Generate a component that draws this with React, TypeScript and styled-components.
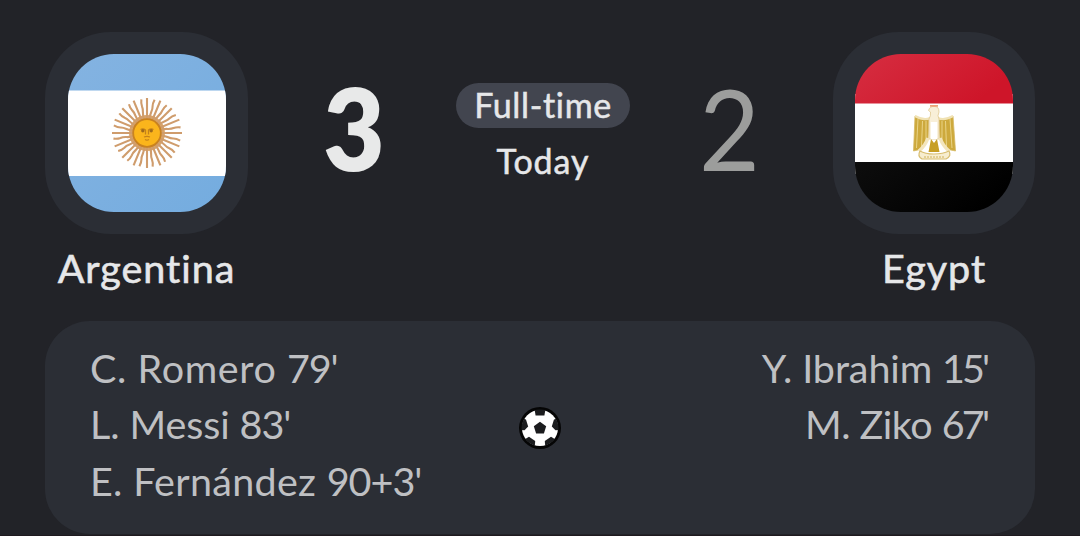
import React from 'react';
import styled, { createGlobalStyle } from 'styled-components';

const GlobalStyle = createGlobalStyle`
  body {
    margin: 0;
    background: #222328;
    overflow: hidden;
  }
`;

const Card = styled.main`
  box-sizing: border-box;
  width: 1080px;
  height: 536px;
  padding: 32px 45px 0;
  background: #222328;
  border-bottom: 1px solid #1f1a1f;
  font-family: Lato, 'Liberation Sans', sans-serif;
  color: #e6e7e9;
`;

const Header = styled.header`
  display: grid;
  grid-template-columns: 203px 212px 166px 207px 202px;
  height: 289px;
`;

const Team = styled.section`
  display: flex;
  flex-direction: column;
  align-items: center;
`;

const Badge = styled.div`
  display: flex;
  align-items: center;
  justify-content: center;
  width: 100%;
  height: 202px;
  border-radius: 66px;
  background: #2b2e35;
`;

const Flag = styled.svg`
  width: 158px;
  height: 158px;
  border-radius: 46px;
`;

const TeamName = styled.div<{ $spacing: number }>`
  margin-top: 10px;
  font-size: 39.5px;
  line-height: 48px;
  letter-spacing: ${(p) => p.$spacing}px;
  -webkit-text-stroke: 0.6px currentColor;
  white-space: nowrap;
`;

const Score = styled.div<{ $winner?: boolean }>`
  margin-top: 27px;
  text-align: center;
  font-size: ${(p) => (p.$winner ? 114 : 113)}px;
  line-height: 136px;
  font-weight: ${(p) => (p.$winner ? 800 : 400)};
  color: ${(p) => (p.$winner ? '#e8e9e9' : '#9c9d9c')};
  transform: scaleX(0.93);
`;

const Status = styled.section`
  display: flex;
  flex-direction: column;
  align-items: center;
  padding-top: 51px;
  font-size: 34px;
  -webkit-text-stroke: 0.5px currentColor;
`;

const Pill = styled.div`
  width: 174px;
  height: 45px;
  border-radius: 23px;
  background: #42454f;
  text-align: center;
  line-height: 44px;
  letter-spacing: 0.65px;
  white-space: nowrap;
`;

const Day = styled.div`
  margin-top: 11px;
  line-height: 44px;
  letter-spacing: 0.9px;
`;

const Scorers = styled.section`
  box-sizing: border-box;
  display: grid;
  grid-template-columns: 1fr 42px 1fr;
  height: 213px;
  padding: 20px 45px 0;
  border-radius: 45px;
  background: #2b2e35;
  color: #bfc0c3;
`;

const GoalList = styled.ul<{ $end?: boolean }>`
  margin: -1px 0 0;
  padding: 0;
  list-style: none;
  text-align: ${(p) => (p.$end ? 'right' : 'left')};
`;

const Goal = styled.li<{ $spacing: number }>`
  font-size: 39.5px;
  line-height: 56.4px;
  letter-spacing: ${(p) => p.$spacing}px;
  white-space: nowrap;
`;

const Minute = styled.span<{ $spacing: number }>`
  letter-spacing: ${(p) => p.$spacing}px;
  margin-right: ${(p) => -p.$spacing}px;
`;

const Ball = styled.svg`
  width: 42px;
  height: 42px;
  margin-top: 66px;
`;

const rays = Array.from({ length: 32 }, (_, i) => i);

function ArgentinaFlag() {
  return (
    <Flag viewBox="0 0 158 158">
      <defs>
        <linearGradient id="sky" x1="0" y1="0" x2="1" y2="1">
          <stop offset="0" stopColor="#84b3e1" />
          <stop offset="1" stopColor="#74acdf" />
        </linearGradient>
      </defs>
      <rect width="158" height="158" fill="url(#sky)" />
      <rect y="36.5" width="158" height="85.5" fill="#fff" />
      <g transform="translate(79 79)">
        <circle r="18" fill="#d9a468" />
        {rays.map((i) => (
          <path
            key={i}
            transform={`rotate(${i * 11.25})`}
            d={i % 2 ? 'M0 -13 C-2 -19 1.6 -22 .3 -27 Q-.3 -30 1 -34' : 'M0 -13 V-35'}
            fill="none"
            stroke="#cf9c6c"
            strokeWidth="2.1"
          />
        ))}
        <circle r="13.8" fill="#fbb51c" stroke="#c98220" strokeWidth="1.8" />
        <g fill="none" stroke="#c4821a" strokeWidth="1.3">
          <path d="M-6.5 -3.500 Q-4 -5 -1.500 -3 V1.500 M6.500 -3.500 Q4 -5 1.500 -3 V1.500" />
          <path d="M-3 4 Q0 2.800 3 4 M-2 6.500 Q0 7.800 2 6.500" />
        </g>
        <circle cx="-4.2" cy="-2.2" r="1.7" fill="#a06a1a" />
        <circle cx="4.2" cy="-2.2" r="1.7" fill="#a06a1a" />
      </g>
    </Flag>
  );
}

function EgyptFlag() {
  return (
    <Flag viewBox="0 0 158 158">
      <defs>
        <linearGradient id="red" x1="0" y1="0" x2="1" y2="0.4">
          <stop offset="0" stopColor="#d62e41" />
          <stop offset="1" stopColor="#ce1529" />
        </linearGradient>
        <linearGradient id="black" x1="0" y1="0" x2="1" y2="0.4">
          <stop offset="0" stopColor="#0d0d0d" />
          <stop offset="1" stopColor="#000" />
        </linearGradient>
      </defs>
      <rect y="40" width="158" height="80" fill="#fff" />
      <path d="M0 0H158V49.500H0Z" fill="url(#red)" />
      <path d="M0 108H158V158H0Z" fill="url(#black)" />
      <g transform="translate(79 51)">
        <path
          d="M-5 15 Q-12 15 -19 11 L-20.500 46 L-12 44 L-6 34Z M5 15 Q12 15 19 11 L21.500 46 L12 44 L6 34Z"
          fill="#cda93c"
          stroke="#d6b963"
          strokeWidth=".8"
        />
        <path
          d="M-16 14 L-17.500 43 M-11.500 16 L-12.500 42 M-8 16 L-8 36 M16 14 L18 43 M11.500 16 L12.500 42 M8 16 L8 36"
          stroke="#ead486"
          strokeWidth="1"
        />
        <path d="M-19 11 Q-10 16 -4 13 M19 11 Q10 16 4 13" fill="none" stroke="#f0e2b4" strokeWidth="2.400" />
        <path
          d="M-5 14 Q-3 11 -3.500 7 L-5.500 5.500 Q-4 1 0 1.500 Q5 1 5 7 Q3 11 5 14 L5 34 H-5Z"
          fill="#f8efd8"
          stroke="#e0c88f"
          strokeWidth=".8"
        />
        <path d="M-4 .8 H4" stroke="#eda279" strokeWidth="1.800" />
        <rect x="-3.200" y="17" width="6.400" height="17" fill="#fff" />
        <path d="M-3 34 L0 38 L3 34 L5.500 47 H-5.500Z" fill="#c79f26" />
        <path
          d="M-6 33 Q-9 41 -15 46 M6 33 Q9 41 15 46"
          fill="none"
          stroke="#f3e5bd"
          strokeWidth="3.500"
        />
        <path
          d="M-14 46 Q-17 51 -12 54 H12 Q18 51 15 46 Q9 49 0 49 Q-9 49 -14 46Z"
          fill="#f7edcf"
          stroke="#d8bd70"
          strokeWidth="1.200"
        />
        <path d="M-10 52 H10" stroke="#cfb05a" strokeWidth="1" strokeDasharray="2 1" />
      </g>
    </Flag>
  );
}

function Football() {
  return (
    <Ball viewBox="-21 -21 42 42">
      <defs>
        <clipPath id="ball">
          <circle r="18.500" />
        </clipPath>
      </defs>
      <circle r="21" fill="#050505" />
      <circle r="18" fill="#fff" />
      <path d="M0 -6.200 L6.200 -1.700 L3.900 5.500 H-3.900 L-6.200 -1.700Z" fill="#1b1c1e" />
      <g clipPath="url(#ball)" fill="#1b1c1e">
        <path d="M-5.500 -19 L-4.400 -12.500 H4.400 L5.500 -19Z" />
        <path d="M19 -10 L14 -8.500 L11.800 -1.500 L15.500 2.300 L19 2Z" />
        <path d="M-19 -10 L-14 -8.500 L-11.800 -1.500 L-15.500 2.300 L-19 2Z" />
        <path d="M15.500 11.500 L11 8.800 L4.800 13 L5.300 19 L12 19Z" />
        <path d="M-15.500 11.500 L-11 8.800 L-4.800 13 L-5.300 19 L-12 19Z" />
      </g>
    </Ball>
  );
}

export default function App() {
  return (
    <>
      <GlobalStyle />
      <Card>
        <Header>
          <Team>
            <Badge>
              <ArgentinaFlag />
            </Badge>
            <TeamName $spacing={1}>Argentina</TeamName>
          </Team>
          <Score $winner>3</Score>
          <Status>
            <Pill>Full-time</Pill>
            <Day>Today</Day>
          </Status>
          <Score>2</Score>
          <Team>
            <Badge>
              <EgyptFlag />
            </Badge>
            <TeamName $spacing={1}>Egypt</TeamName>
          </Team>
        </Header>
        <Scorers>
          <GoalList>
            <Goal $spacing={0.6}>
              C. Romero <Minute $spacing={-1.2}>79'</Minute>
            </Goal>
            <Goal $spacing={-0.1}>
              L. Messi <Minute $spacing={-1}>83'</Minute>
            </Goal>
            <Goal $spacing={0.3}>
              E. Fernández <Minute $spacing={-1}>90+3'</Minute>
            </Goal>
          </GoalList>
          <Football />
          <GoalList $end>
            <Goal $spacing={-0.1}>
              Y. Ibrahim <Minute $spacing={-3}>15'</Minute>
            </Goal>
            <Goal $spacing={-0.5}>
              M. Ziko <Minute $spacing={-2.8}>67'</Minute>
            </Goal>
          </GoalList>
        </Scorers>
      </Card>
    </>
  );
}
